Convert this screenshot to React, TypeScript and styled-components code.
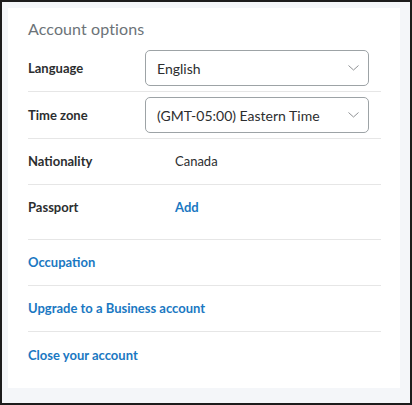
import styled, { createGlobalStyle } from "styled-components";

const GlobalStyle = createGlobalStyle`
  html, body {
    margin: 0;
    padding: 0;
    background: #ffffff;
  }
  * {
    box-sizing: border-box;
  }
`;

const Frame = styled.div`
  width: 412px;
  height: 405px;
  border: 2px solid #1c1c1c;
  background: #f4f6f9;
  padding: 6px 10px 15px 6px;
  font-family: Lato, "Noto Sans", Arial, sans-serif;
`;

const Card = styled.section`
  width: 392px;
  height: 380px;
  background: #ffffff;
  padding: 10px 19px 11px 20px;
`;

const Title = styled.h2`
  margin: 0 0 5px;
  font-size: 16px;
  line-height: 22px;
  font-weight: 400;
  letter-spacing: 0.1px;
  color: #6c7378;
`;

const Row = styled.div<{ $tall?: boolean; $last?: boolean; $select?: boolean; $single?: boolean }>`
  display: grid;
  grid-template-columns: ${({ $select, $single }) =>
    $single ? "1fr" : $select ? "117px 224px" : "147px 1fr"};
  align-items: ${({ $tall }) => ($tall ? "start" : "center")};
  min-height: ${({ $tall, $select }) => ($tall ? "55px" : $select ? "47px" : "46px")};
  padding: ${({ $tall, $select }) => ($tall ? "14px 0 0" : $select ? "5px 0" : "0")};
  border-bottom: ${({ $last }) => ($last ? "none" : "1px solid #e6e6e6")};
`;

const Label = styled.span`
  font-size: 13px;
  line-height: 17px;
  font-weight: 700;
  color: #2c2e2f;
`;

const Value = styled.span`
  font-size: 13px;
  line-height: 17px;
  color: #2c2e2f;
`;

const Link = styled.a`
  font-size: 13px;
  line-height: 17px;
  font-weight: 700;
  color: #1a78c2;
  text-decoration: none;
  cursor: pointer;
`;

const SelectBox = styled.div`
  display: flex;
  align-items: center;
  justify-content: space-between;
  height: 36px;
  padding: 0 9px 0 11px;
  border: 1px solid #9da3a6;
  border-radius: 5px;
  font-size: 14px;
  color: #2c2e2f;
  cursor: pointer;
`;

const Chevron = () => (
  <svg width="11" height="6" viewBox="0 0 11 6" fill="none">
    <path d="M0.5 0.5 L5.5 5 L10.5 0.5" stroke="#8f9295" strokeWidth="1" />
  </svg>
);

function Select({ value }: { value: string }) {
  return (
    <SelectBox>
      <span>{value}</span>
      <Chevron />
    </SelectBox>
  );
}

export default function App() {
  return (
    <>
      <GlobalStyle />
      <Frame>
        <Card>
          <Title>Account options</Title>
          <Row $select>
            <Label>Language</Label>
            <Select value="English" />
          </Row>
          <Row $select>
            <Label>Time zone</Label>
            <Select value="(GMT-05:00) Eastern Time" />
          </Row>
          <Row>
            <Label>Nationality</Label>
            <Value>Canada</Value>
          </Row>
          <Row $tall>
            <Label>Passport</Label>
            <Link>Add</Link>
          </Row>
          <Row $single>
            <Link>Occupation</Link>
          </Row>
          <Row $single>
            <Link>Upgrade to a Business account</Link>
          </Row>
          <Row $single $last>
            <Link>Close your account</Link>
          </Row>
        </Card>
      </Frame>
    </>
  );
}
